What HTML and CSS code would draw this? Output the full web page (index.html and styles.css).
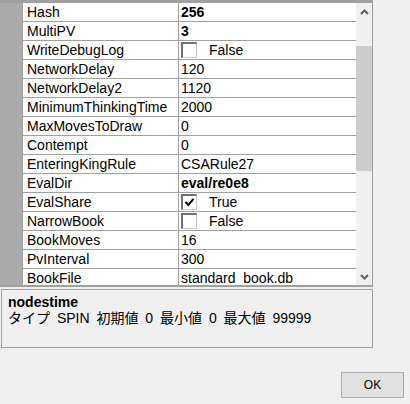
FILE: index.html
```html
<!DOCTYPE html>
<html>
<head>
<meta charset="utf-8">
<link rel="stylesheet" href="styles.css">
</head>
<body>
<div class="grid">
  <div class="rows">
    <div class="row"><div class="gutter"></div><div class="name">Hash</div><div class="val bold">256</div></div>
    <div class="row"><div class="gutter"></div><div class="name">MultiPV</div><div class="val bold">3</div></div>
    <div class="row"><div class="gutter"></div><div class="name">WriteDebugLog</div><div class="val"><span class="cb"></span><span class="cbtext">False</span></div></div>
    <div class="row"><div class="gutter"></div><div class="name">NetworkDelay</div><div class="val">120</div></div>
    <div class="row"><div class="gutter"></div><div class="name">NetworkDelay2</div><div class="val">1120</div></div>
    <div class="row"><div class="gutter"></div><div class="name">MinimumThinkingTime</div><div class="val">2000</div></div>
    <div class="row"><div class="gutter"></div><div class="name">MaxMovesToDraw</div><div class="val">0</div></div>
    <div class="row"><div class="gutter"></div><div class="name">Contempt</div><div class="val">0</div></div>
    <div class="row"><div class="gutter"></div><div class="name">EnteringKingRule</div><div class="val">CSARule27</div></div>
    <div class="row"><div class="gutter"></div><div class="name">EvalDir</div><div class="val bold">eval/re0e8</div></div>
    <div class="row"><div class="gutter"></div><div class="name">EvalShare</div><div class="val"><span class="cb"><svg width="11" height="11" viewBox="0 0 11 11"><path d="M1.5 5 L4.3 8 L9.5 1.8" fill="none" stroke="#000" stroke-width="2"/></svg></span><span class="cbtext">True</span></div></div>
    <div class="row"><div class="gutter"></div><div class="name">NarrowBook</div><div class="val"><span class="cb"></span><span class="cbtext">False</span></div></div>
    <div class="row"><div class="gutter"></div><div class="name">BookMoves</div><div class="val">16</div></div>
    <div class="row"><div class="gutter"></div><div class="name">PvInterval</div><div class="val">300</div></div>
    <div class="row"><div class="gutter"></div><div class="name">BookFile</div><div class="val">standard_book.db</div></div>
  </div>
  <div class="scroll">
    <div class="arrow"><svg width="9" height="6" viewBox="0 0 9 6"><path d="M1 5 L4.5 1.5 L8 5" fill="none" stroke="#606060" stroke-width="2"/></svg></div>
    <div class="thumb"></div>
    <div class="spacer"></div>
    <div class="arrow"><svg width="9" height="6" viewBox="0 0 9 6"><path d="M1 1 L4.5 4.5 L8 1" fill="none" stroke="#606060" stroke-width="2"/></svg></div>
  </div>
</div>
<div class="desc">
  <div class="desc-title">nodestime</div>
  <div class="desc-text">タイプ SPIN 初期値 0 最小値 0 最大値 99999</div>
</div>
<div class="footer">
  <button class="ok">OK</button>
</div>
</body>
</html>
```
FILE: styles.css
```css
html, body {
  margin: 0;
  padding: 0;
  background: #f0f0f0;
  width: 410px;
  height: 404px;
  overflow: hidden;
  font-family: "Liberation Sans", "Noto Sans CJK JP", sans-serif;
  color: #000;
}
.grid {
  display: flex;
  width: 373px;
  height: 287px;
  box-sizing: border-box;
  border-top: 3px solid #a0a0a0;
  border-bottom: 2px solid #a0a0a0;
  border-right: 1px solid #a0a0a0;
}
.rows {
  width: 356px;
  overflow: hidden;
  background: #ffffff;
}
.row {
  display: flex;
  height: 19px;
  font-size: 14px;
  line-height: 18px;
}
.gutter {
  width: 22px;
  flex: none;
  background: #ababab;
  border-right: 1px solid #a0a0a0;
}
.name {
  width: 151px;
  flex: none;
  padding-left: 4px;
  height: 18px;
  border-bottom: 1px solid #a0a0a0;
  border-right: 1px solid #a0a0a0;
  white-space: nowrap;
  overflow: hidden;
}
.val {
  flex: 1;
  padding-left: 2px;
  height: 18px;
  border-bottom: 1px solid #a0a0a0;
  white-space: nowrap;
  display: flex;
  align-items: center;
}
.bold {
  font-weight: bold;
}
.cb {
  width: 16px;
  height: 16px;
  box-sizing: border-box;
  border-top: 2px solid #707070;
  border-left: 2px solid #707070;
  border-right: 1px solid #c8c8c8;
  border-bottom: 1px solid #c8c8c8;
  background: #fff;
  display: flex;
  align-items: center;
  justify-content: center;
}
.cbtext {
  margin-left: 12px;
}
.scroll {
  width: 16px;
  background: #f0f0f0;
  display: flex;
  flex-direction: column;
}
.arrow {
  height: 17px;
  display: flex;
  align-items: center;
  justify-content: center;
}
.thumb {
  margin-top: 26px;
  height: 125px;
  background: #cdcdcd;
}
.spacer {
  flex: 1;
}
.desc {
  margin: 2px 0 0 1px;
  width: 372px;
  height: 59px;
  box-sizing: border-box;
  border: 1px solid #a0a0a0;
  padding: 5px 6px;
}
.desc-title {
  font-weight: bold;
  font-size: 14px;
  line-height: 15px;
}
.desc-text {
  font-size: 14px;
  line-height: 16px;
  word-spacing: 3px;
}
.footer {
  display: flex;
  justify-content: flex-end;
  padding-right: 6px;
  margin-top: 24px;
}
.ok {
  width: 63px;
  height: 26px;
  background: #e1e1e1;
  border: 1px solid #adadad;
  font-family: "Liberation Sans", sans-serif;
  font-size: 12px;
  padding: 0;
  color: #000;
}
```
